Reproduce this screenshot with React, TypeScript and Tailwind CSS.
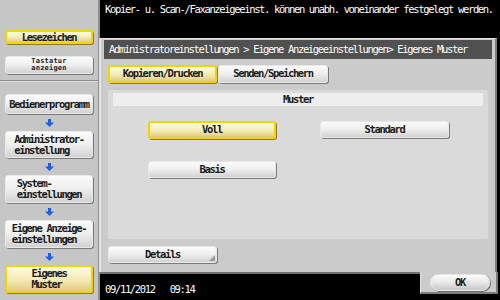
import type { ReactNode } from 'react';

const mono = 'font-["DejaVu_Sans_Mono","Liberation_Mono",monospace] text-[10.5px] tracking-[-1.35px]';
const greyBtn =
  'bg-linear-to-b from-[#fbfbfb] via-[#eeeeee] to-[#d2d2d2] rounded-[3px] border border-[#e9e9e9] shadow-[1px_1px_0_#7a7a7a]';
const yellowBtn =
  'bg-linear-to-b from-[#fffbe2] via-[#f6ebb8] to-[#e2cc7e] rounded-[3px] border-2 border-[#f3d400] shadow-[1px_1px_0_#8a7a30]';

function Arrow() {
  return (
    <div className="h-[17px] flex items-center justify-center">
      <svg width="9" height="8" viewBox="0 0 9 8">
        <rect x="3" y="0" width="3" height="4" fill="#1c5fe6" />
        <polygon points="0,3.5 9,3.5 4.5,8" fill="#1c5fe6" />
      </svg>
    </div>
  );
}

function SideBtn({ children, active, h }: { children: ReactNode; active?: boolean; h: string }) {
  return (
    <div
      className={`mx-[5px] w-[88px] ${h} flex items-center justify-center font-bold text-[#1a1a1a] leading-[11px] ${
        active ? yellowBtn : greyBtn
      }`}
    >
      <span className="text-left">{children}</span>
    </div>
  );
}

export default function App() {
  return (
    <div className={`w-[500px] h-[300px] flex bg-black overflow-hidden ${mono}`}>
      {/* Sidebar */}
      <aside className="w-[100px] h-full bg-[#c6c6c6] border-r-2 border-[#8c8c8c] flex flex-col shrink-0">
        <div className="mt-[30px]">
          <SideBtn h="h-[14px]" active>
            Lesezeichen
          </SideBtn>
        </div>
        <div className="mt-[12px]">
          <div
            className={`mx-[5px] w-[88px] h-[18px] flex flex-col items-center justify-center font-bold text-[7px] leading-[7px] tracking-[0.2px] text-[#1a1a1a] ${greyBtn}`}
          >
            <span>Tastatur</span>
            <span>anzeigen</span>
          </div>
        </div>
        <div className="mt-[6px] border-t border-b border-t-[#8e8e8e] border-b-[#dedede]" />
        <div className="mt-[12px]">
          <SideBtn h="h-[20px]">Bedienerprogramm</SideBtn>
        </div>
        <Arrow />
        <SideBtn h="h-[27px]">
          Administrator-
          <br />
          einstellung
        </SideBtn>
        <Arrow />
        <SideBtn h="h-[28px]">
          System-
          <br />
          einstellungen
        </SideBtn>
        <Arrow />
        <SideBtn h="h-[28px]">
          Eigene Anzeige-
          <br />
          einstellungen
        </SideBtn>
        <Arrow />
        <SideBtn h="h-[28px]" active>
          Eigenes
          <br />
          Muster
        </SideBtn>
      </aside>

      {/* Main */}
      <div className="flex-1 flex flex-col">
        <div className="h-[38px] pl-[5px] pt-[3px] text-white leading-[12px] whitespace-nowrap">
          Kopier- u. Scan-/Faxanzeigeeinst. können unabh. voneinander festgelegt werden.
        </div>

        {/* Panel */}
        <div className="ml-[-1px] w-[398px] h-[234px] bg-[#cbcbcb] border-l-2 border-t border-r-2 border-l-[#e4e4e4] border-t-[#e4e4e4] border-r-[#7c7c7c] flex flex-col">
          <div className="mx-[3px] mt-[1px] h-[19px] bg-[#505050] text-white pl-[5px] flex items-center whitespace-nowrap">
            Administratoreinstellungen &gt; Eigene Anzeigeeinstellungen&gt; Eigenes Muster
          </div>

          <div className="mt-[6px] ml-[7px] flex gap-[1px]">
            <div className={`w-[109px] h-[18px] flex items-center justify-center font-bold text-[#1a1a1a] ${yellowBtn}`}>
              Kopieren/Drucken
            </div>
            <div className={`w-[110px] h-[18px] flex items-center justify-center font-bold text-[#1a1a1a] ${greyBtn}`}>
              Senden/Speichern
            </div>
          </div>

          <div className="mt-[7px] ml-[7px] w-[380px] h-[149px] bg-[#dadada] rounded-[2px] flex flex-col">
            <div className="mt-[3px] mx-[5px] h-[13px] bg-[#eeeeee] flex items-center justify-center font-bold text-[#1a1a1a]">
              Muster
            </div>
            <div className="mt-[15px] ml-[40px] flex gap-[44px]">
              <div className={`w-[128px] h-[18px] flex items-center justify-center font-bold text-[#1a1a1a] ${yellowBtn}`}>
                Voll
              </div>
              <div className={`w-[129px] h-[17px] flex items-center justify-center font-bold text-[#1a1a1a] ${greyBtn}`}>
                Standard
              </div>
            </div>
            <div className="mt-[22px] ml-[40px]">
              <div className={`w-[128px] h-[17px] flex items-center justify-center font-bold text-[#1a1a1a] ${greyBtn}`}>
                Basis
              </div>
            </div>
          </div>

          <div className="mt-[7px] ml-[7px]">
            <div className={`relative w-[109px] h-[17px] flex items-center justify-center font-bold text-[#1a1a1a] ${greyBtn}`}>
              Details
              <svg className="absolute right-[1px] bottom-[1px]" width="6" height="6" viewBox="0 0 6 6">
                <polygon points="6,0 6,6 0,6" fill="#9a9a9a" />
              </svg>
            </div>
          </div>
        </div>

        {/* Bottom row */}
        <div className="flex-1 flex">
          <div className="flex-1 border-t-2 border-[#707070] pl-[5px] pt-[9px] text-white leading-[12px] whitespace-nowrap">
            09/11/2012&nbsp;&nbsp;&nbsp;09:14
          </div>
          <div className="w-[78px] h-[22px] mr-[2px] bg-[#cbcbcb] border-l border-l-[#e4e4e4] border-r-2 border-b-2 border-[#7c7c7c] pt-[2px] pl-[9px]">
            <div className="w-[60px] h-[17px] rounded-full bg-linear-to-b from-[#fbfbfb] via-[#e8e8e8] to-[#c8c8c8] border border-[#e6e6e6] shadow-[1px_1px_0_#6e6e6e] flex items-center justify-center font-bold text-[#1a1a1a]">
              OK
            </div>
          </div>
        </div>
      </div>
    </div>
  );
}
